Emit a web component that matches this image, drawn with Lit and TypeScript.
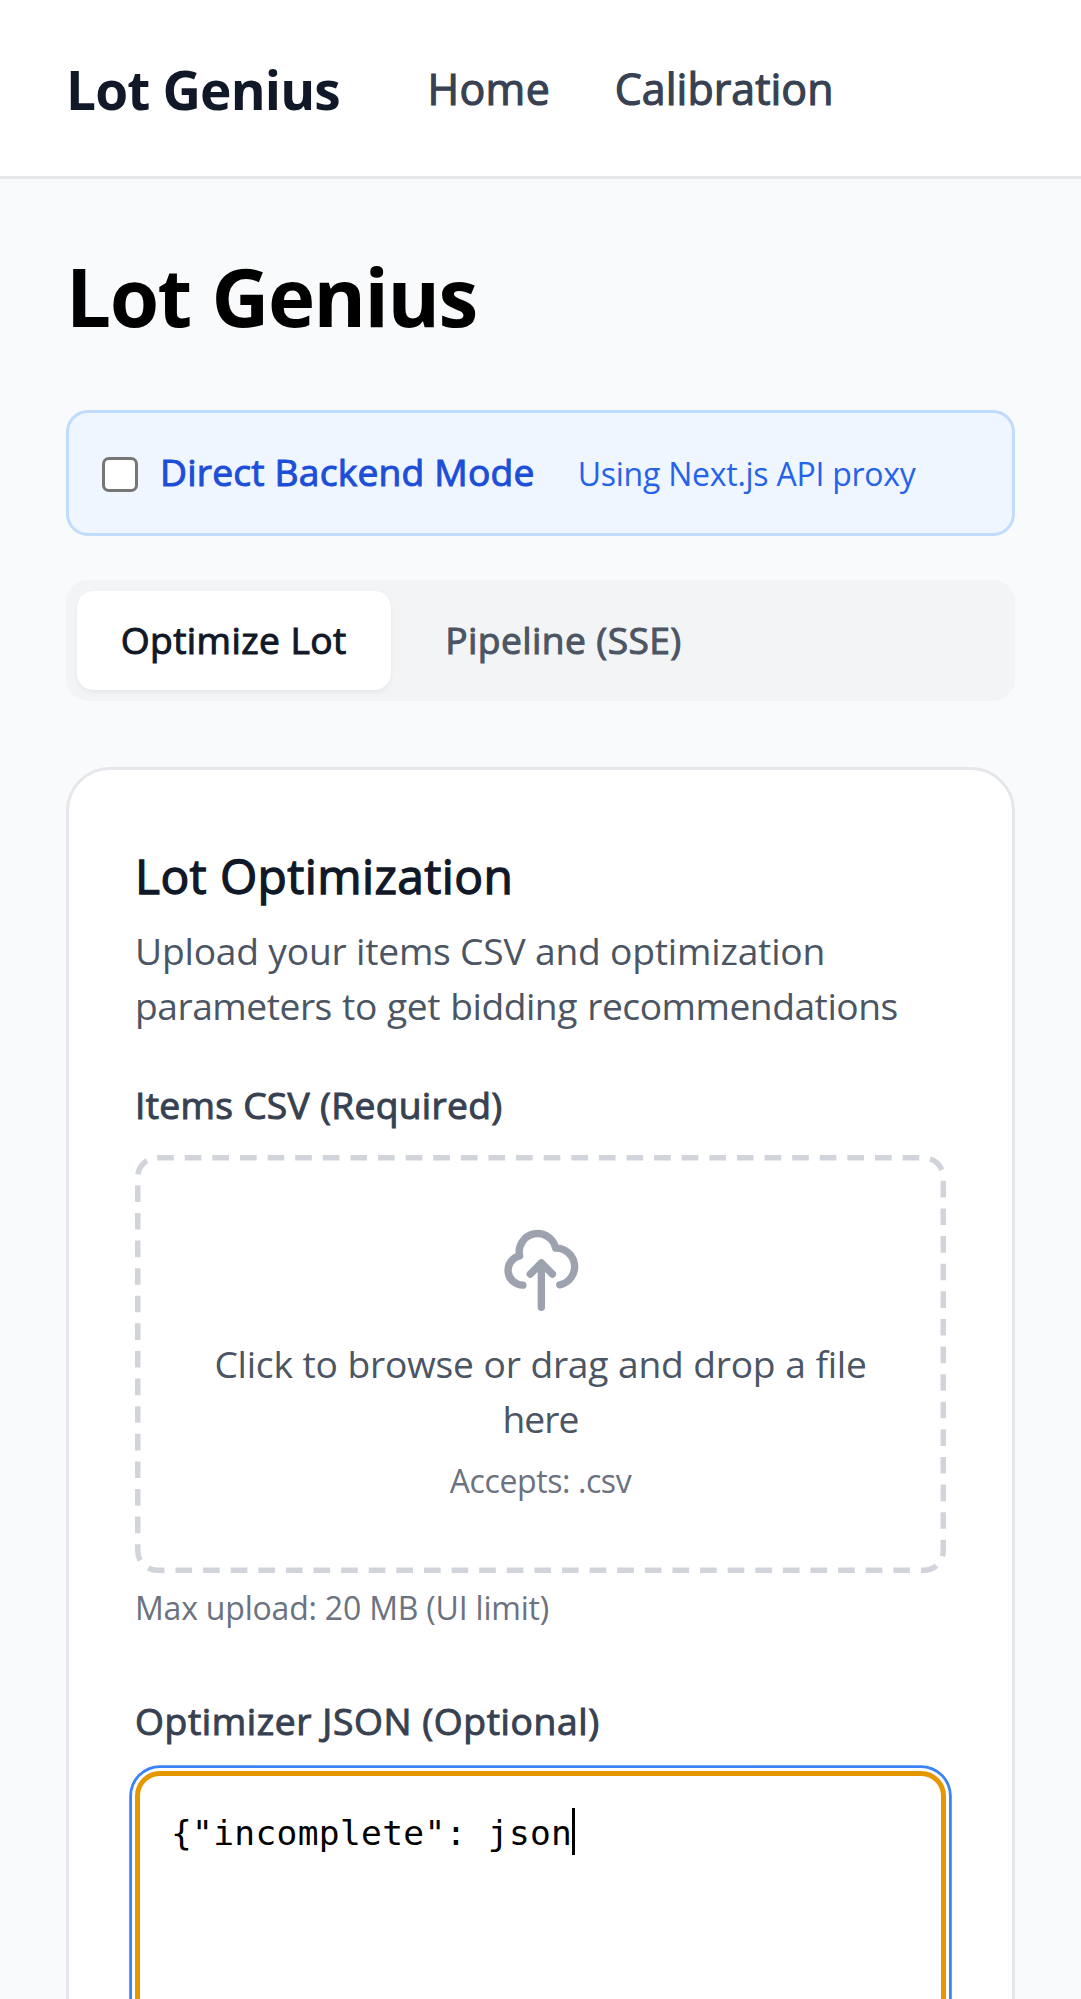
import { LitElement, html, css } from "lit";
import { customElement, property } from "lit/decorators.js";

@customElement("site-header")
export class SiteHeader extends LitElement {
  static styles = css`
    :host { display: block; }
    .bar {
      box-sizing: border-box;
      height: 178.6px;
      padding: 50.4px 66px 0;
      display: flex;
      background: #fff;
      border-bottom: 3px solid #e5e7eb;
      white-space: nowrap;
    }
    .brand {
      font-size: 53.2px;
      font-weight: 700;
      line-height: 80px;
      letter-spacing: -0.86px;
      color: #111827;
      width: 361.4px;
    }
    .links {
      display: flex;
      padding-top: 6px;
      color: #374151;
      font-size: 42.9px;
      line-height: 66px;
      -webkit-text-stroke: 0.027em;
    }
    .home { letter-spacing: 0.4px; width: 187.3px; }
    .calibration { letter-spacing: 0.05px; }
  `;
  render() {
    return html`<header class="bar">
      <div class="brand">Lot Genius</div>
      <nav class="links">
        <span class="home">Home</span>
        <span class="calibration">Calibration</span>
      </nav>
    </header>`;
  }
}

@customElement("mode-banner")
export class ModeBanner extends LitElement {
  static styles = css`
    :host { display: block; }
    .banner {
      box-sizing: border-box;
      height: 126px;
      padding: 34.5px 33px 0;
      border: 3px solid #bfdbfe;
      border-radius: 22px;
      background: #eff6ff;
      display: flex;
      align-items: baseline;
      white-space: nowrap;
    }
    .check {
      box-sizing: border-box;
      align-self: flex-start;
      width: 35.5px;
      height: 35px;
      margin-top: 9.7px;
      border: 3px solid #767676;
      border-radius: 7px;
      background: #fff;
    }
    .label {
      margin-left: 22.5px;
      width: 417.7px;
      font-size: 37.2px;
      line-height: 50px;
      letter-spacing: 0.2px;
      color: #1d4ed8;
      -webkit-text-stroke: 0.027em;
    }
    .note {
      font-size: 32px;
      line-height: 44px;
      letter-spacing: -0.25px;
      color: #2563eb;
    }
  `;
  render() {
    return html`<div class="banner">
      <span class="check" role="checkbox" aria-checked="false"></span>
      <span class="label">Direct Backend Mode</span>
      <span class="note">Using Next.js API proxy</span>
    </div>`;
  }
}

@customElement("tab-strip")
export class TabStrip extends LitElement {
  static styles = css`
    :host { display: block; }
    .strip {
      box-sizing: border-box;
      height: 121px;
      padding: 11px;
      gap: 11px;
      border-radius: 22px;
      background: #f3f4f6;
      display: flex;
    }
    .tab {
      box-sizing: border-box;
      height: 99px;
      padding: 0 43.7px;
      border-radius: 16.6px;
      font-size: 37.2px;
      line-height: 98px;
      letter-spacing: 0.4px;
      color: #4b5563;
      white-space: nowrap;
      -webkit-text-stroke: 0.027em;
    }
    .active {
      width: 313.5px;
      color: #111827;
      background: #fff;
      box-shadow: 0 2.8px 5.5px rgba(0, 0, 0, 0.05);
    }
  `;
  render() {
    return html`<div class="strip">
      <div class="tab active">Optimize Lot</div>
      <div class="tab">Pipeline (SSE)</div>
    </div>`;
  }
}

@customElement("file-drop")
export class FileDrop extends LitElement {
  @property() accept = "";
  static styles = css`
    :host { display: block; }
    .zone {
      position: relative;
      box-sizing: border-box;
      height: 418px;
      padding-top: 71px;
      display: flex;
      flex-direction: column;
      align-items: center;
      text-align: center;
      white-space: nowrap;
    }
    .outline {
      position: absolute;
      inset: 0;
      width: 100%;
      height: 100%;
      fill: none;
      stroke: #d1d5db;
      stroke-width: 5.5;
      stroke-dasharray: 16.63 10.98;
    }
    .cloud {
      width: 88.7px;
      height: 88.7px;
      margin-left: 2px;
      fill: none;
      stroke: #9ca3af;
      stroke-width: 2;
      stroke-linecap: round;
      stroke-linejoin: round;
    }
    .prompt {
      margin-top: 21.2px;
      font-size: 37.2px;
      line-height: 55.4px;
      letter-spacing: -0.25px;
      word-spacing: 0.4px;
      color: #4b5563;
    }
    .short { letter-spacing: -0.9px; }
    .accepts {
      margin-top: 12px;
      font-size: 32px;
      line-height: 44px;
      letter-spacing: -0.4px;
      color: #6b7280;
    }
  `;
  render() {
    return html`<div class="zone">
      <svg class="outline" viewBox="0 0 811 418">
        <rect x="2.75" y="2.75" width="805.5" height="412.5" rx="19.4" />
      </svg>
      <svg class="cloud" viewBox="0 0 24 24">
        <path d="M7 16a4 4 0 01-.88-7.903A5 5 0 1115.9 6L16 6a5 5 0 011 9.9M15 13l-3-3m0 0l-3 3m3-3v12" />
      </svg>
      <div class="prompt">Click to browse or drag and drop a file<br /><span class="short">here</span></div>
      <div class="accepts">Accepts: ${this.accept}</div>
    </div>`;
  }
}

@customElement("json-editor")
export class JsonEditor extends LitElement {
  @property() value = "";
  static styles = css`
    :host { display: block; }
    .field {
      box-sizing: border-box;
      height: 360px;
      padding: 29px 0 0 31px;
      border: 5.5px solid #e59700;
      border-radius: 25px;
      background: #fff;
      box-shadow: 0 0 0 3px #fff, 0 0 0 5.8px #3b82f6;
      display: flex;
      align-items: flex-start;
    }
    .code {
      font-family: "DejaVu Sans Mono", monospace;
      font-size: 34.6px;
      line-height: 56px;
      letter-spacing: 0.3px;
      color: #000;
      white-space: pre;
    }
    .caret {
      width: 3px;
      height: 47px;
      margin-top: 3.5px;
      background: #000;
    }
  `;
  render() {
    return html`<div class="field"><span class="code">${this.value}</span><span class="caret"></span></div>`;
  }
}

@customElement("app-root")
export class AppRoot extends LitElement {
  static styles = css`
    :host {
      display: block;
      height: 1999px;
      overflow: hidden;
      background: #f9fafb;
      font-family: "Open Sans", "Noto Sans", sans-serif;
      font-kerning: normal;
    }
    .page { padding: 67.4px 66px 0; }
    .title {
      margin: 0;
      font-size: 79.9px;
      font-weight: 700;
      line-height: 100px;
      letter-spacing: -1.5px;
      word-spacing: 1.5px;
      color: #000;
      white-space: nowrap;
    }
    .banner { margin-top: 64px; }
    .tabs { margin-top: 44px; }
    .card {
      box-sizing: border-box;
      height: 1400px;
      margin-top: 66px;
      padding: 74.8px 66px 0;
      border: 3px solid #e5e7eb;
      border-radius: 44px;
      background: #fff;
      white-space: nowrap;
    }
    .heading {
      margin: 0;
      font-size: 47.9px;
      font-weight: 400;
      line-height: 62px;
      letter-spacing: 0.4px;
      color: #111827;
      -webkit-text-stroke: 0.027em;
    }
    .lead {
      margin: 16.1px 0 0;
      font-size: 37.2px;
      line-height: 55.4px;
      letter-spacing: -0.2px;
      color: #4b5563;
    }
    .tight { letter-spacing: -0.48px; word-spacing: 1.1px; }
    .label {
      font-size: 37.2px;
      line-height: 55px;
      letter-spacing: 0.3px;
      color: #374151;
      -webkit-text-stroke: 0.027em;
    }
    .csv { margin-top: 43.3px; }
    .json { margin-top: 63px; letter-spacing: 0.6px; }
    .drop, .editor { margin-top: 23px; }
    .limit {
      margin-top: 12.6px;
      font-size: 32px;
      line-height: 44px;
      letter-spacing: -0.2px;
      color: #6b7280;
    }
  `;
  render() {
    return html`
      <site-header></site-header>
      <main class="page">
        <h1 class="title">Lot Genius</h1>
        <mode-banner class="banner"></mode-banner>
        <tab-strip class="tabs"></tab-strip>
        <section class="card">
          <h2 class="heading">Lot Optimization</h2>
          <p class="lead">Upload your items CSV and optimization<br /><span class="tight">parameters to get bidding recommendations</span></p>
          <div class="label csv">Items CSV (Required)</div>
          <file-drop class="drop" accept=".csv"></file-drop>
          <div class="limit">Max upload: 20 MB (UI limit)</div>
          <div class="label json">Optimizer JSON (Optional)</div>
          <json-editor class="editor" value='{"incomplete": json'></json-editor>
        </section>
      </main>
    `;
  }
}
